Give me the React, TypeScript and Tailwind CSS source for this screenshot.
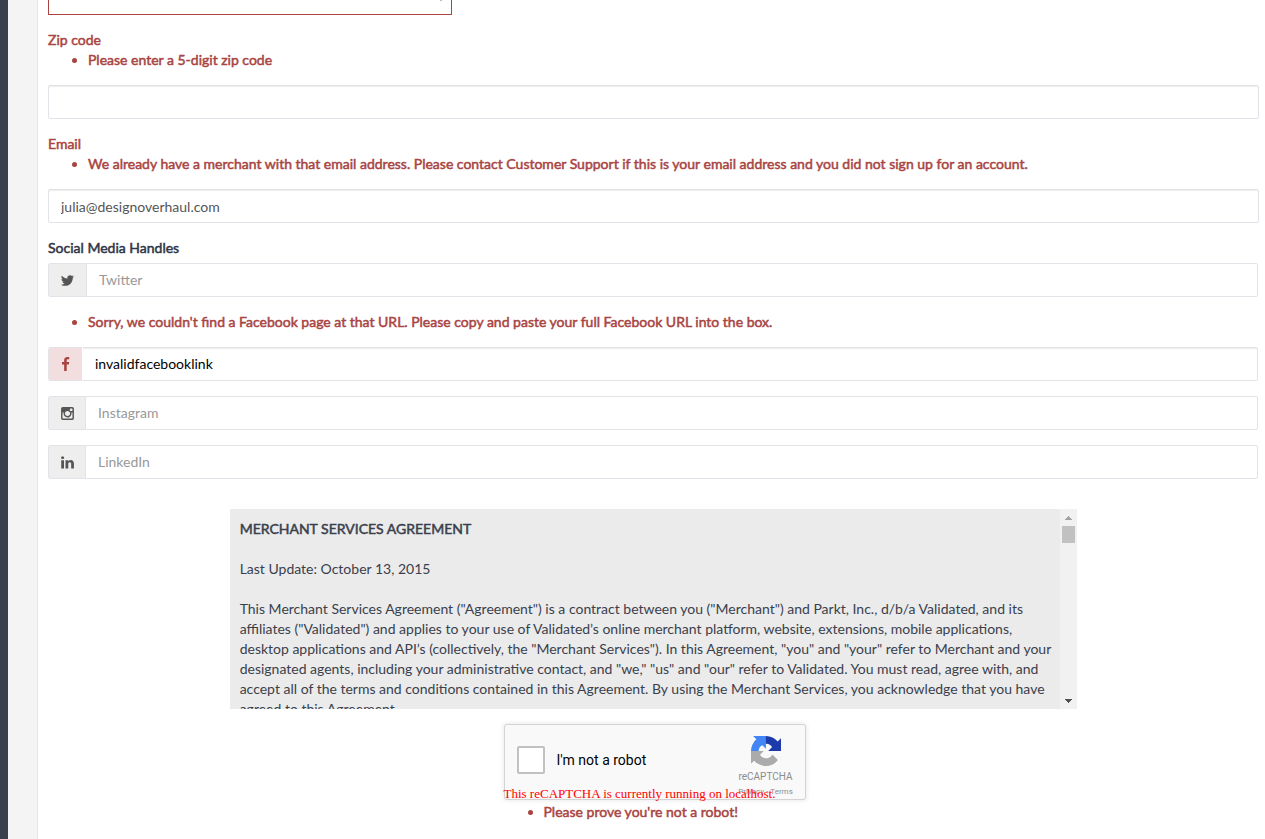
import type { ReactNode } from "react";

const boldText = "font-normal [-webkit-text-stroke:0.5px_currentColor]";

function FieldErrors({ children }: { children: ReactNode }) {
  return (
    <ul className={`mb-[15px] list-disc pl-10 text-[#a94442] ${boldText}`}>
      <li>{children}</li>
    </ul>
  );
}

function TextField({ id, label, error, value, type = "text" }: { id: string; label: string; error: string; value?: string; type?: string }) {
  return (
    <div className="mb-[15px]">
      <label htmlFor={id} className={`block text-[#a94442] ${boldText}`}>
        {label}
      </label>
      <FieldErrors>{error}</FieldErrors>
      <input
        id={id}
        type={type}
        defaultValue={value}
        className="block h-[34px] w-full rounded-[2px] border border-[#e2e2e9] bg-white px-3 text-[#555] shadow-[inset_0_1px_1px_rgba(0,0,0,0.075)] outline-none"
      />
    </div>
  );
}

function Glyph({ d }: { d: string }) {
  return (
    <svg viewBox="0 0 1792 1792" className="h-[15px] w-[15px] shrink-0 fill-current" aria-hidden="true">
      <path d={d} />
    </svg>
  );
}

const twitter =
  "M1684 408q-67 98-162 167 1 14 1 42 0 130-38 259.5t-115.5 248.5-184.5 210.5-258 146-323 54.5q-271 0-496-145 35 4 78 4 225 0 401-138-105-2-188-64.5t-114-159.5q33 5 61 5 43 0 85-11-112-23-185.5-111.5t-73.5-205.5v-4q68 38 146 41-66-44-105-115t-39-154q0-88 44-163 121 149 294.5 238.5t371.5 99.5q-8-38-8-74 0-134 94.5-228.5t228.5-94.5q140 0 236 102 109-21 205-78-37 115-142 178 93-10 186-50z";
const facebook =
  "M1343 12v264h-157q-86 0-116 36t-30 108v189h293l-39 296h-254v759h-306v-759h-255v-296h255v-218q0-186 104-288.5t277-102.5q147 0 228 12z";
const instagram =
  "M1490 1426v-648h-135q20 63 20 131 0 126-64 232.5t-174 168.5-240 62q-197 0-337-135.5t-140-327.5q0-68 20-131h-141v648q0 26 17.5 43.5t43.5 17.5h1069q25 0 43-17.5t18-43.5zm-284-533q0-124-90.5-211.5t-218.5-87.5q-127 0-217.5 87.5t-90.5 211.5 90.5 211.5 217.5 87.5q128 0 218.5-87.5t90.5-211.5zm284-360v-165q0-28-20-48.5t-49-20.5h-174q-29 0-49 20.5t-20 48.5v165q0 29 20 49t49 20h174q29 0 49-20t20-49zm174-208v1142q0 81-58 139t-139 58h-1142q-81 0-139-58t-58-139v-1142q0-81 58-139t139-58h1142q81 0 139 58t58 139z";
const linkedin =
  "M477 625v991h-330v-991h330zm21-306q1 73-50.5 122t-135.5 49h-2q-82 0-132-49t-50-122q0-74 51.5-122.5t134.5-48.5 133 48.5 51 122.5zm1166 729v568h-329v-530q0-105-40.5-164.5t-126.5-59.5q-63 0-105.5 34.5t-63.5 85.5q-11 30-11 81v553h-329q2-399 2-647t-1-296l-1-48h329v144h-2q20-32 41-56t56.5-52 87-43.5 114.5-15.5q171 0 275 113.5t104 332.5z";

function SocialField({ name, icon, addon, value, invalid }: { name: string; icon: string; addon: string; value?: string; invalid?: boolean }) {
  return (
    <div className="mr-px mb-[15px] flex h-[34px]">
      <label
        htmlFor={name}
        aria-label={name}
        className={`flex shrink-0 items-center justify-center rounded-l-[3px] border border-r-0 border-[#e2e2e9] ${addon} ${invalid ? "bg-[#f2dede] text-[#a94442]" : "bg-[#eee] text-[#555]"}`}
      >
        <Glyph d={icon} />
      </label>
      <input
        id={name}
        type="text"
        placeholder={name}
        defaultValue={value}
        className={`min-w-0 flex-1 rounded-r-[2px] border border-[#e2e2e9] bg-white px-3 outline-none placeholder:text-[#999] ${invalid ? "border-l-white text-black shadow-[inset_0_1px_1px_rgba(0,0,0,0.075)]" : "text-[#555]"}`}
      />
    </div>
  );
}

function Agreement() {
  return (
    <section aria-label="Merchant Services Agreement" className="mx-auto flex h-[200px] w-[70%] bg-[#ebebeb]">
      <div className="min-w-0 flex-1 overflow-hidden py-2.5 pr-1 pl-2.5 text-[#3a3f4c]">
        <h2 className={boldText}>MERCHANT SERVICES AGREEMENT</h2>
        <p className="mt-5">Last Update: October 13, 2015</p>
        <p className="mt-5">
          This Merchant Services Agreement ("Agreement") is a contract between you ("Merchant") and Parkt, Inc., d/b/a Validated, and its
          affiliates ("Validated") and applies to your use of Validated’s online merchant platform, website, extensions, mobile
          applications, desktop applications and API’s (collectively, the "Merchant Services"). In this Agreement, "you" and "your" refer
          to Merchant and your designated agents, including your administrative contact, and "we," "us" and "our" refer to Validated. You
          must read, agree with, and accept all of the terms and conditions contained in this Agreement. By using the Merchant Services,
          you acknowledge that you have agreed to this Agreement.
        </p>
      </div>
      <div className="flex w-[17px] shrink-0 flex-col items-center bg-[#f1f1f1]">
        <button type="button" aria-label="Scroll up" className="flex h-[17px] w-full items-center justify-center text-[#a3a3a3]">
          <svg viewBox="0 0 7 4" className="h-1 w-[7px] fill-current" shapeRendering="crispEdges">
            <path d="M3 0h1v1h1v1h1v1h1v1H0V3h1V2h1V1h1z" />
          </svg>
        </button>
        <div className="w-[13px] flex-1">
          <div className="h-[17px] bg-[#c1c1c1]" />
        </div>
        <button type="button" aria-label="Scroll down" className="flex h-[17px] w-full items-center justify-center text-[#505050]">
          <svg viewBox="0 0 7 4" className="h-1 w-[7px] fill-current" shapeRendering="crispEdges">
            <path d="M0 0h7v1H6v1H5v1H4v1H3V3H2V2H1V1H0z" />
          </svg>
        </button>
      </div>
    </section>
  );
}

function RecaptchaLogo() {
  return (
    <svg viewBox="0 0 64 64" className="h-[30px] w-[30px]" aria-hidden="true">
      <path
        fill="#1c3aa9"
        d="M64 31.955l-.033-1.370V4.687l-7.160 7.160C50.948 4.674 42.033.093 32.050.093c-10.390 0-19.622 4.960-25.458 12.640l11.736 11.860a15.550 15.550 0 0 1 4.754-5.334c2.050-1.600 4.952-2.906 8.968-2.906.485 0 .860.057 1.135.163 4.976.393 9.288 3.140 11.828 7.124l-8.307 8.307L64 31.953"
      />
      <path
        fill="#4285f4"
        d="M31.862.094l-1.370.033H4.594l7.160 7.160C4.580 13.147 0 22.060 0 32.046c0 10.390 4.960 19.622 12.640 25.458L24.500 45.768a15.550 15.550 0 0 1-5.334-4.754c-1.600-2.050-2.906-4.952-2.906-8.968 0-.485.057-.860.163-1.135.393-4.976 3.140-9.288 7.124-11.828l8.307 8.307L31.860.095"
      />
      <path
        fill="#ababab"
        d="M.001 32.045l.033 1.370v25.898l7.160-7.160c5.860 7.173 14.774 11.754 24.760 11.754 10.390 0 19.622-4.960 25.458-12.640l-11.736-11.860a15.550 15.550 0 0 1-4.754 5.334c-2.050 1.600-4.952 2.906-8.968 2.906-.485 0-.860-.057-1.135-.163-4.976-.393-9.288-3.140-11.828-7.124l8.307-8.307c-10.522.040-22.400.066-27.295-.005"
      />
    </svg>
  );
}

function Captcha() {
  return (
    <div className="mx-auto mt-[15px] w-[304px] pl-0.5">
      <div className="relative w-[302px]">
        <div className="flex h-[76px] rounded-[3px] border border-[#d3d3d3] bg-[#f9f9f9] font-[Roboto,sans-serif] shadow-[0_0_4px_1px_rgba(0,0,0,0.08)]">
          <label className="flex flex-1 items-center gap-3 pb-1 pl-3 text-black">
            <input type="checkbox" className="h-7 w-7 appearance-none rounded-[2px] border-2 border-[#c1c1c1] bg-white" />
            I'm not a robot
          </label>
          <div className="flex w-[78px] shrink-0 flex-col items-center pt-[11px]">
            <RecaptchaLogo />
            <div className="mt-[5px] text-[10px] leading-3 text-[#8c8c8c]">reCAPTCHA</div>
            <div className="mt-[3px] flex gap-0.5 text-[8px] leading-3 text-[#8c8c8c]">
              <a href="#privacy">Privacy</a>
              <span>-</span>
              <a href="#terms">Terms</a>
            </div>
          </div>
        </div>
        <p className="absolute top-[62px] left-0 font-['Liberation_Serif',serif] text-[13px] leading-4 whitespace-nowrap text-[#ff0000]">
          This reCAPTCHA is currently running on localhost.
        </p>
      </div>
      <div className="mt-0.5">
        <FieldErrors>Please prove you're not a robot!</FieldErrors>
      </div>
    </div>
  );
}

export default function App() {
  return (
    <div className="flex min-h-screen bg-[#f4f4f4] font-[Lato,sans-serif] text-[14px] leading-5">
      <aside className="w-2 shrink-0 bg-[#3a3f4c]" />
      <main className="ml-[29px] min-w-0 flex-1 border-l border-[#e4e4e6] bg-white pr-1.5 pl-2.5">
        <form>
          <div className="relative mb-[15px] flex h-[15px] w-1/3 items-end overflow-hidden">
            <select aria-label="State" className="h-[34px] w-full shrink-0 appearance-none border border-[#a94442] bg-white px-3 text-[#555] outline-none">
              <option></option>
            </select>
            <svg viewBox="0 0 2 1" className="absolute top-0 right-2.5 h-px w-0.5 fill-[#bbb]" aria-hidden="true">
              <path d="M0 0h2v1H0z" />
            </svg>
          </div>
          <TextField id="zip" label="Zip code" error="Please enter a 5-digit zip code" />
          <TextField
            id="email"
            label="Email"
            type="email"
            value="julia@designoverhaul.com"
            error="We already have a merchant with that email address. Please contact Customer Support if this is your email address and you did not sign up for an account."
          />
          <fieldset>
            <legend className={`mb-[5px] text-[#2f3546] ${boldText}`}>Social Media Handles</legend>
            <SocialField name="Twitter" icon={twitter} addon="w-[38px]" />
            <FieldErrors>Sorry, we couldn't find a Facebook page at that URL. Please copy and paste your full Facebook URL into the box.</FieldErrors>
            <SocialField name="Facebook" icon={facebook} addon="w-[34px]" value="invalidfacebooklink" invalid />
            <SocialField name="Instagram" icon={instagram} addon="w-[37px]" />
            <div className="mb-[30px]">
              <SocialField name="LinkedIn" icon={linkedin} addon="w-[37px]" />
            </div>
          </fieldset>
          <Agreement />
          <Captcha />
        </form>
      </main>
    </div>
  );
}
